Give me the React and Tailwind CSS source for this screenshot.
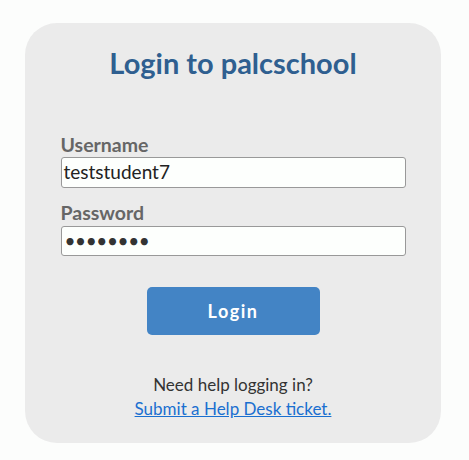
export default function App() {
  return (
    <div className="min-h-[460px] w-[469px] bg-[#fcfdfc] pt-[23px] pl-[25px]" style={{ fontFamily: 'Lato, "Open Sans", sans-serif' }}>
      <div className="flex h-[420px] w-[416px] flex-col items-center rounded-[32px] bg-[#ebebeb]">
        <h1 className="mt-[23px] text-[29px] leading-[34px] font-bold text-[#2f5f90]">Login to palcschool</h1>
        <div className="mt-[54px] flex w-[345px] flex-col">
          <label className="text-[19.5px] leading-[22px] font-bold text-[#666]">Username</label>
          <div className="mt-[1px] flex h-[31px] items-center rounded-[3px] border border-[#999] bg-[#fdfffd] px-[2px] text-[19px] text-[#222]">teststudent7</div>
          <label className="mt-[14px] text-[19.5px] leading-[22px] font-bold text-[#666]">Password</label>
          <div className="mt-[2px] flex h-[30px] items-center rounded-[3px] border border-[#999] bg-[#fdfffd] px-[3px] text-[19px] tracking-[-0.4px] text-[#333]">••••••••</div>
        </div>
        <button className="mt-[31px] h-[48px] w-[173px] rounded-[5px] bg-[#4384c5] text-[18px] font-bold tracking-[1.5px] text-white">Login</button>
        <p className="mt-[38px] text-[17px] leading-[24px] text-[#333]">Need help logging in?</p>
        <a href="#" className="text-[17px] leading-[24px] text-[#1a6fd0] underline">Submit a Help Desk ticket.</a>
      </div>
    </div>
  );
}
